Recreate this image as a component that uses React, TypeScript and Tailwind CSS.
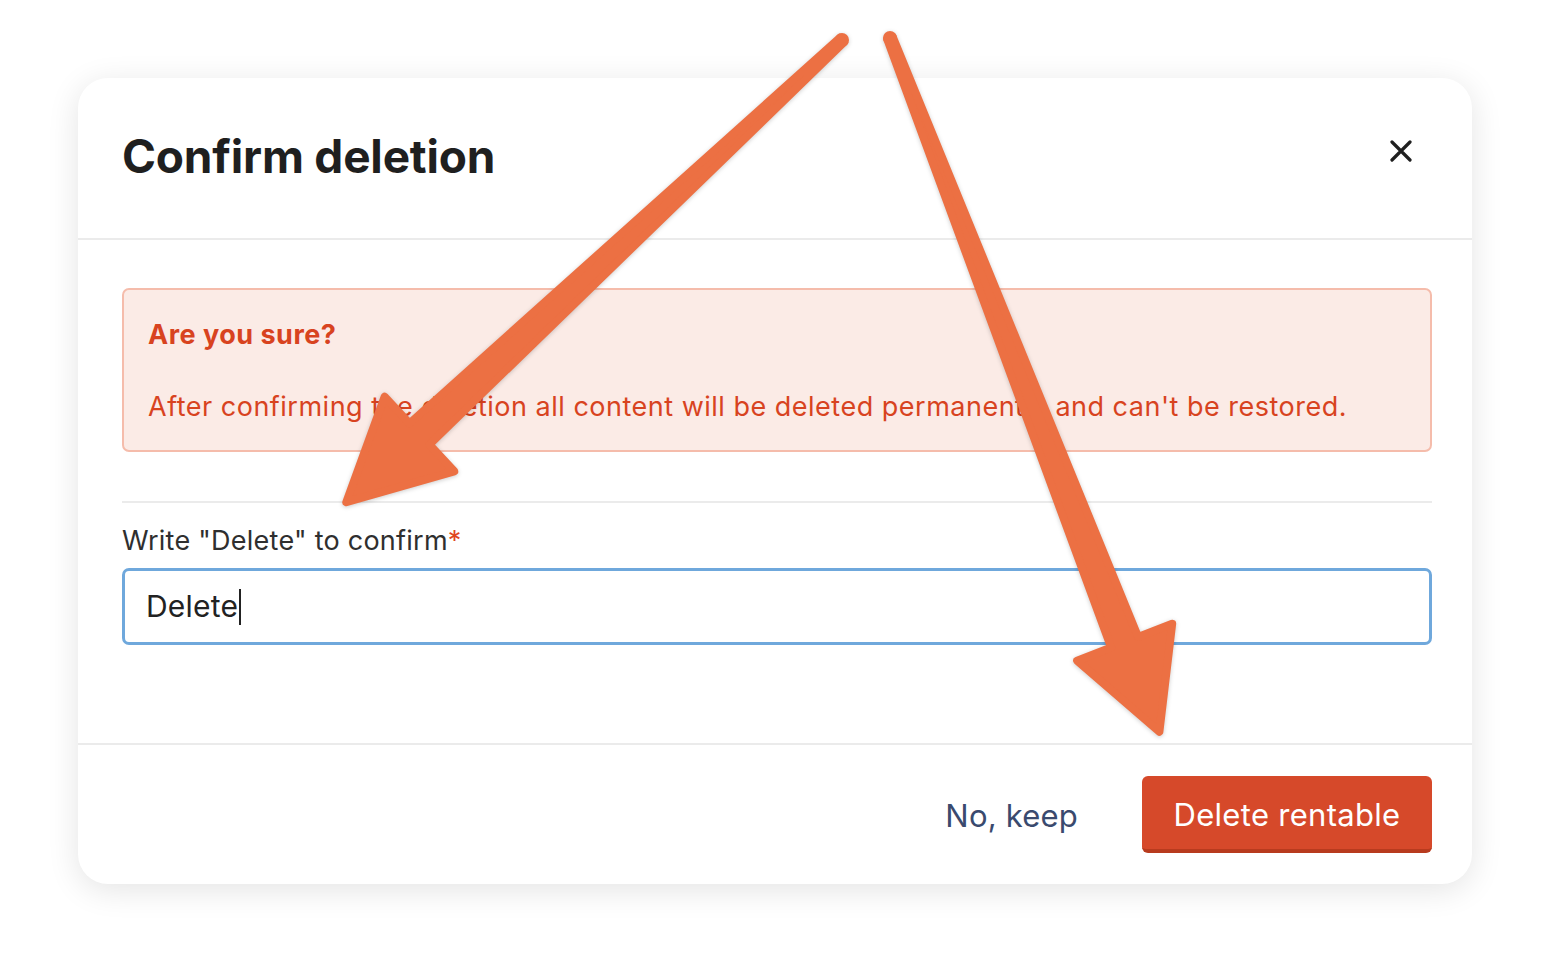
import React from 'react';

type Pt = [number, number];

// tapered arrow polygon, computed from tail / tip coordinates
function arrowShape(tail: Pt, tip: Pt, tailW: number, neckW: number, headW: number, headLen: number) {
  const s = 8; // stroke used for rounding corners
  const dx = tip[0] - tail[0];
  const dy = tip[1] - tail[1];
  const L = Math.hypot(dx, dy);
  const ux = dx / L;
  const uy = dy / L;
  const nx = -uy;
  const ny = ux;
  const t: Pt = [tip[0] - ux * 10, tip[1] - uy * 10];
  const neck: Pt = [tip[0] - ux * (headLen - s / 2), tip[1] - uy * (headLen - s / 2)];
  const p = (b: Pt, w: number): string => `${b[0] + nx * w},${b[1] + ny * w}`;
  const points = [
    p(tail, (tailW - s) / 2),
    p(neck, (neckW - s) / 2),
    p(neck, (headW - s) / 2),
    `${t[0]},${t[1]}`,
    p(neck, -(headW - s) / 2),
    p(neck, -(neckW - s) / 2),
    p(tail, -(tailW - s) / 2),
  ].join(' ');
  return { points, r: tailW / 2 };
}

function Arrow({ tail, tip, tailW, neckW, headW, headLen }: { tail: Pt; tip: Pt; tailW: number; neckW: number; headW: number; headLen: number }) {
  const a = arrowShape(tail, tip, tailW, neckW, headW, headLen);
  return (
    <g>
      <circle cx={tail[0]} cy={tail[1]} r={a.r} fill="#EC7043" />
      <polygon points={a.points} fill="#EC7043" stroke="#EC7043" strokeWidth={8} strokeLinejoin="round" />
    </g>
  );
}

export default function App() {
  return (
    <div className="relative min-h-screen bg-white pl-[78px] pt-[78px] font-['Inter',sans-serif]">
      {/* Dialog */}
      <div className="w-[1394px] rounded-[30px] bg-white shadow-[0_6px_32px_rgba(0,0,0,0.11)]">
        {/* Header */}
        <div className="flex h-[162px] items-center justify-between border-b-2 border-[#ebebeb] pl-[44px] pr-[60px]">
          <h1 className="-mt-[5px] text-[46px] font-bold leading-none tracking-[-0.2px] text-[#1f1f1f]">Confirm deletion</h1>
          <button className="-mt-[14px] text-[#1f1f1f]">
            <svg width="22" height="22" viewBox="0 0 22 22" fill="none">
              <path d="M2 2L20 20M20 2L2 20" stroke="currentColor" strokeWidth="3.2" strokeLinecap="round" />
            </svg>
          </button>
        </div>

        {/* Body */}
        <div className="pb-[98px] pl-[44px] pr-[40px] pt-[48px]">
          <div className="rounded-[7px] border-2 border-[#f5bcab] bg-[#fbebe6] px-[24px] pb-[26px] pt-[28px] text-[27px] leading-[34px] tracking-[0.5px] text-[#d8431f]">
            <p className="font-bold">Are you sure?</p>
            <p className="mt-[38px]">After confirming the deletion all content will be deleted permanently and can't be restored.</p>
          </div>

          <div className="mt-[49px] border-t-2 border-[#ebebeb] pt-[21px]">
            <label className="block text-[27px] leading-[34px] tracking-[0.25px] text-[#2f2f2f]">
              Write "Delete" to confirm<span className="text-[#e0461f]">*</span>
            </label>
            <div className="mt-[10px] flex h-[77px] items-center rounded-[7px] border-[3px] border-[#6fa8dc] bg-white px-[21px]">
              <span className="text-[30px] tracking-[0.2px] text-[#222]">Delete</span>
              <span className="ml-[1px] h-[36px] w-[2px] bg-[#222]" />
            </div>
          </div>
        </div>

        {/* Footer */}
        <div className="flex h-[141px] items-start justify-end gap-[64px] border-t-2 border-[#ebebeb] pl-[44px] pr-[40px] pt-[31px]">
          <button className="mt-[20px] text-[31px] leading-[40px] tracking-[0.2px] text-[#3a4a6e]">No, keep</button>
          <button className="h-[77px] w-[290px] rounded-[6px] border-b-[4px] border-[#b83b1e] bg-[#d6492a] pt-[5px] text-[31px] tracking-[0.3px] text-white">
            Delete rentable
          </button>
        </div>
      </div>

      {/* Annotation arrows */}
      <svg className="pointer-events-none absolute left-0 top-0 drop-shadow-[0_1px_2px_rgba(0,0,0,0.2)]" width="1550" height="962">
        <Arrow tail={[842, 40]} tip={[339, 509]} tailW={14} neckW={37} headW={110} headLen={114} />
        <Arrow tail={[890, 38]} tip={[1163, 741]} tailW={14} neckW={37} headW={110} headLen={110} />
      </svg>
    </div>
  );
}
